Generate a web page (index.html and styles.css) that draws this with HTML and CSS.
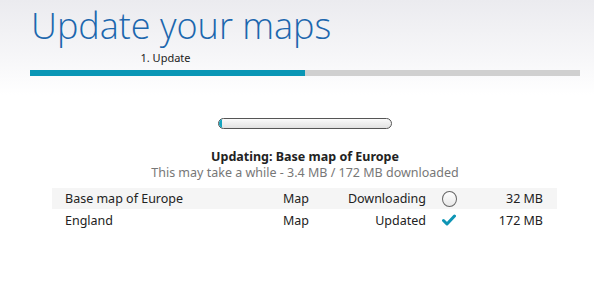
FILE: index.html
```html
<!DOCTYPE html>
<html>
<head>
<meta charset="utf-8">
<link rel="stylesheet" href="styles.css">
</head>
<body>
<div class="page">
  <header class="head">
    <h1 class="title">Update your maps</h1>
    <div class="steps">
      <div class="step active"><span class="step-label">1. Update</span><div class="step-bar"></div></div>
      <div class="step"><span class="step-label"></span><div class="step-bar"></div></div>
    </div>
  </header>
  <section class="status">
    <div class="pbar"><div class="pfill" style="width:2%"></div></div>
    <div class="s-title">Updating: Base map of Europe</div>
    <div class="s-sub">This may take a while - 3.4 MB / 172 MB downloaded</div>
  </section>
  <div class="table">
    <div class="row alt">
      <span class="c-name">Base map of Europe</span>
      <span class="c-type">Map</span>
      <span class="c-state">Downloading</span>
      <span class="c-icon"><span class="spinner"></span></span>
      <span class="c-size">32 MB</span>
    </div>
    <div class="row">
      <span class="c-name">England</span>
      <span class="c-type">Map</span>
      <span class="c-state">Updated</span>
      <span class="c-icon"><svg class="check" width="14" height="12" viewBox="0 0 14 12"><path d="M1.5 6.5 L5 10 L12.5 2" fill="none" stroke="#0e95b5" stroke-width="3" stroke-linecap="round" stroke-linejoin="round"/></svg></span>
      <span class="c-size">172 MB</span>
    </div>
  </div>
</div>
</body>
</html>
```
FILE: styles.css
```css
html, body { margin: 0; padding: 0; }
body {
  width: 594px; height: 296px; overflow: hidden;
  font-family: "Noto Sans", "Open Sans", sans-serif;
  background: linear-gradient(#ebebef 0px, #f7f7f9 60px, #ffffff 95px);
  color: #222;
}
.page { padding: 0 14px 0 30px; }
.head { padding-top: 4px; }
.title {
  margin: 0 0 0 1px;
  font-family: "Open Sans", "Noto Sans", sans-serif;
  font-weight: 300;
  font-size: 36px;
  line-height: 44px;
  color: #1c67ae;
}
.steps { display: flex; margin-top: 2px; }
.step { flex: 1; display: flex; flex-direction: column; align-items: center; }
.step-label { font-size: 11px; line-height: 15px; height: 15px; color: #222; margin-left: -4px; }
.step-bar { align-self: stretch; height: 6px; background: #d0d0d0; margin-top: 5px; }
.step.active .step-bar { background: #0a96b5; }
.status { display: flex; flex-direction: column; align-items: center; padding-top: 42px; }
.pbar {
  width: 172px; height: 9px; border: 1px solid #555; border-radius: 6px;
  background: linear-gradient(#fafafa, #e2e2e2);
  overflow: hidden; margin-left: -1px;
}
.pfill { height: 100%; background: #14a4bf; }
.s-title { font-weight: bold; font-size: 12.5px; line-height: 16px; margin-top: 20px; color: #222; }
.s-sub { font-size: 12.5px; line-height: 16px; color: #777; }
.table { margin: 0 23px 0 22px; padding-top: 7px; }
.row { display: flex; align-items: center; height: 22px; font-size: 12.5px; color: #222; }
.row.alt { background: #f5f5f5; height: 21px; }
.c-name { width: 218px; padding-left: 13px; }
.c-type { width: 60px; }
.c-state { width: 83px; text-align: right; }
.c-icon { width: 46px; display: flex; justify-content: center; }
.c-size { width: 71px; text-align: right; }
.spinner { display: block; width: 13px; height: 14px; border: 1.5px solid #666; border-radius: 50%; background: linear-gradient(#fff, #e8e8e8); }
.check { display: block; }
```
